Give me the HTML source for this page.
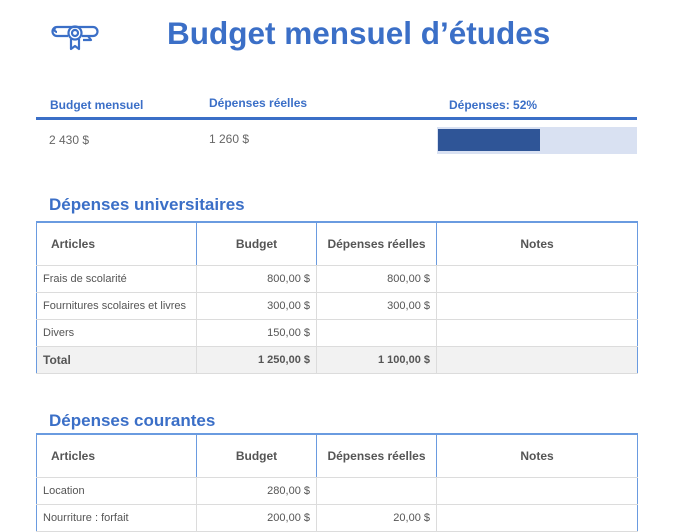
<!DOCTYPE html>
<html><head><meta charset="utf-8"><style>
body{margin:0;width:675px;height:520px;overflow:hidden;background:#fff;font-family:"Liberation Sans",sans-serif;position:relative}
.a{position:absolute}
.blue{color:#3b6fc7}
table{position:absolute;left:36px;border-collapse:collapse;table-layout:fixed;font-size:11px;color:#555}
td,th{border:1px solid #dcdcdc;padding:0 6px;height:26px}
th{height:42px;font-size:12px;color:#555;border-top:2px solid #6a9be0;border-left:1px solid #6a9be0;border-right:1px solid #6a9be0;border-bottom:1px solid #dcdcdc}
td.r{text-align:right;padding-right:6px}
tr.t td{background:#f2f2f2;font-weight:bold;height:26px}
td:first-child{border-left:1px solid #6a9be0}
td:last-child{border-right:1px solid #6a9be0}
</style></head><body>
<svg class="a" style="left:50px;top:23px" width="50" height="28" viewBox="0 0 50 28" fill="none" stroke="#3b6fc7" stroke-width="2.2" stroke-linejoin="round">
<path d="M7 4h36a4.5 4.5 0 0 1 0 9h-5M7 4a4.5 4.5 0 0 0 0 9h11M7 9a2.3 2.3 0 0 1 0-5M32 13h6l3 4h-8"/>
<circle cx="25" cy="10" r="6.5"/><circle cx="25" cy="10" r="3"/>
<path d="M21 16v10l4-3 4 3v-10"/>
</svg>
<div class="a blue" style="left:167px;top:15px;font-size:31.5px;font-weight:bold">Budget mensuel d’études</div>
<div class="a blue" style="left:50px;top:98px;font-size:12px;font-weight:bold">Budget mensuel</div>
<div class="a blue" style="left:209px;top:96px;font-size:12px;font-weight:bold">Dépenses réelles</div>
<div class="a blue" style="left:449px;top:98px;font-size:12px;font-weight:bold">Dépenses: 52%</div>
<div class="a" style="left:36px;top:117px;width:601px;height:3px;background:#3b6fc7"></div>
<div class="a" style="left:49px;top:133px;font-size:12px;color:#666">2 430 $</div>
<div class="a" style="left:209px;top:132px;font-size:12px;color:#666">1 260 $</div>
<div class="a" style="left:437px;top:127px;width:200px;height:27px;background:#d9e1f2"></div>
<div class="a" style="left:438px;top:129px;width:102px;height:22px;background:#2f5597"></div>
<div class="a blue" style="left:49px;top:195px;font-size:17px;font-weight:bold">Dépenses universitaires</div>
<table style="top:221px;width:601px">
<colgroup><col style="width:160px"><col style="width:120px"><col style="width:120px"><col style="width:201px"></colgroup>
<tr><th style="text-align:left;padding-left:14px">Articles</th><th>Budget</th><th>Dépenses réelles</th><th>Notes</th></tr>
<tr><td>Frais de scolarité</td><td class="r">800,00 $</td><td class="r">800,00 $</td><td></td></tr>
<tr><td>Fournitures scolaires et livres</td><td class="r">300,00 $</td><td class="r">300,00 $</td><td></td></tr>
<tr><td>Divers</td><td class="r">150,00 $</td><td></td><td></td></tr>
<tr class="t"><td style="font-size:12px">Total</td><td class="r">1 250,00 $</td><td class="r">1 100,00 $</td><td></td></tr>
</table>
<div class="a blue" style="left:49px;top:411px;font-size:17px;font-weight:bold">Dépenses courantes</div>
<table style="top:433px;width:601px">
<colgroup><col style="width:160px"><col style="width:120px"><col style="width:120px"><col style="width:201px"></colgroup>
<tr><th style="text-align:left;padding-left:14px">Articles</th><th>Budget</th><th>Dépenses réelles</th><th>Notes</th></tr>
<tr><td>Location</td><td class="r">280,00 $</td><td></td><td></td></tr>
<tr><td>Nourriture : forfait</td><td class="r">200,00 $</td><td class="r">20,00 $</td><td></td></tr>
</table>
</body></html>
